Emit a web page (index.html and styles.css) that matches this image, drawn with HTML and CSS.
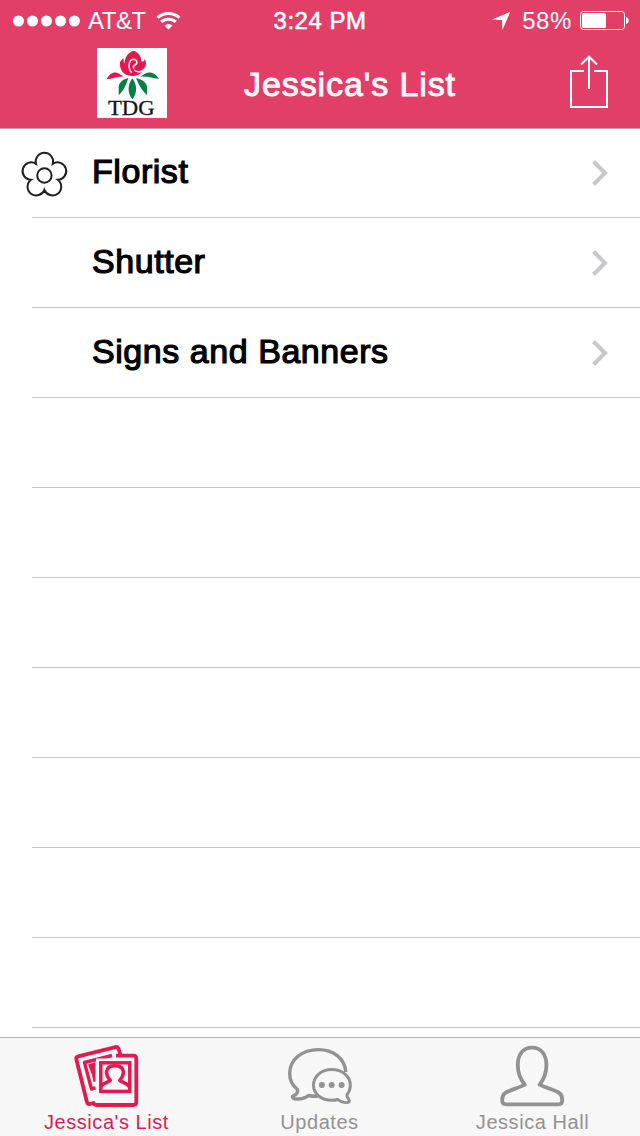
FILE: index.html
```html
<!DOCTYPE html>
<html>
<head>
<meta charset="UTF-8">
<meta name="viewport" content="width=device-width, initial-scale=1">
<title>Jessica's List</title>
<link rel="stylesheet" href="styles.css">
</head>
<body>

<header class="header">
  <div class="status">
    <div class="status-left">
      <svg class="signal" width="68" height="12" viewBox="0 0 68 12" fill="#fff">
        <circle cx="6.5" cy="6" r="5.5"/>
        <circle cx="20.5" cy="6" r="5.5"/>
        <circle cx="34.5" cy="6" r="5.5"/>
        <circle cx="48.5" cy="6" r="5.5"/>
        <circle cx="62.4" cy="6" r="5.5"/>
      </svg>
      <span class="carrier">AT&amp;T</span>
      <svg class="wifi" width="26" height="20" viewBox="0 0 26 20" fill="none" stroke="#fff" stroke-width="3">
        <path d="M1.5 6.7 A16.5 16.5 0 0 1 23.5 6.7"/>
        <path d="M5.2 10.9 A11 11 0 0 1 19.8 10.9"/>
        <path d="M8.5 14.5 A6 6 0 0 1 16.5 14.5 L12.5 18.5 Z" fill="#fff" stroke="none"/>
      </svg>
    </div>
    <div class="status-time">3:24 PM</div>
    <div class="status-right">
      <svg class="location" width="19" height="19" viewBox="0 0 19 19" fill="#fff">
        <path d="M18.3 0.8 L10.4 19 L10 9 L0 8.5 Z"/>
      </svg>
      <span class="percent">58%</span>
      <svg class="battery" width="49" height="19" viewBox="0 0 49 19">
        <rect x=".5" y=".5" width="44" height="18" rx="3" fill="none" stroke="#fff"/>
        <rect x="2" y="2" width="24" height="15" rx="1.5" fill="#fff"/>
        <path d="M46 6 C49.6 6.6 49.6 12.4 46 13 Z" fill="#fff"/>
      </svg>
    </div>
  </div>

  <div class="nav">
    <svg class="logo" width="70" height="70" viewBox="0 0 210 210">
      <rect width="210" height="210" fill="#fff"/>
      <path fill="#e2184e" d="M92 82 C74 77 67 58 69 43 C71 37 76 34 81 31 C79 38 80 43 83 46 C83 29 92 13 110 8 C125 14 134 25 132 39 C138 43 143 39 143 32 C152 49 144 64 130 68 C122 70 115 69 110 64 C112 72 122 76 135 73 C124 84 107 87 92 82 Z"/>
      <path fill="none" stroke="#fff" stroke-width="4.5" d="M104 74 C92 62 94 35 109 34 C121 34 123 47 114 51 C109 53 108 58 111 62"/>
      <path fill="#e2184e" d="M29 94 C36 78 48 71 59 74 C68 77 75 82 82 86 C63 84 48 93 29 94 Z"/>
      <path fill="#078048" d="M129 86 C141 78 151 71 164 74 C175 77 181 85 186 92 C166 91 153 84 129 86 Z"/>
      <path fill="#078048" d="M94 90 C79 93 66 103 65 117 V141 C77 132 88 111 94 90 Z"/>
      <path fill="#078048" d="M117 90 C132 93 149 103 150 117 V141 C138 132 125 111 117 90 Z"/>
      <path fill="#078048" d="M106 91 C91 111 91 136 106 154 C121 136 121 111 106 91 Z"/>
      <text x="33" y="201" textLength="140" lengthAdjust="spacingAndGlyphs" class="logo-text">TDG</text>
    </svg>
    <h1 class="title">Jessica's List</h1>
    <svg class="share" width="40" height="54" viewBox="0 0 40 54" fill="none" stroke="#fff" stroke-width="2">
      <path d="M15 16 H2 V52 H38 V16 H25"/>
      <path d="M20 2 V34 M12 9.5 L20 1.7 L28 9.5"/>
    </svg>
  </div>
</header>

<ul class="list">
  <li class="row">
    <span class="row-icon">
      <svg width="48" height="48" viewBox="0 0 48 48" fill="none" stroke="#231f20" stroke-width="2">
        <path d="M16 14.8 A8.7 8.7 0 1 1 32.8 14.8 A8.7 8.7 0 1 1 37.8 30.8 A8.7 8.7 0 1 1 24.4 40.8 A8.7 8.7 0 1 1 11 30.8 A8.7 8.7 0 1 1 16 14.8 Z"/>
        <circle cx="24.4" cy="26.5" r="7.2"/>
      </svg>
    </span>
    <span class="row-label">Florist</span>
    <svg class="chevron" width="18" height="28" viewBox="0 0 18 28"><path d="M2.5 2.5 L14 14 L2.5 25.5"/></svg>
  </li>
  <li class="row">
    <span class="row-icon"></span>
    <span class="row-label">Shutter</span>
    <svg class="chevron" width="18" height="28" viewBox="0 0 18 28"><path d="M2.5 2.5 L14 14 L2.5 25.5"/></svg>
  </li>
  <li class="row">
    <span class="row-icon"></span>
    <span class="row-label">Signs and Banners</span>
    <svg class="chevron" width="18" height="28" viewBox="0 0 18 28"><path d="M2.5 2.5 L14 14 L2.5 25.5"/></svg>
  </li>
  <li class="row"></li>
  <li class="row"></li>
  <li class="row"></li>
  <li class="row"></li>
  <li class="row"></li>
  <li class="row"></li>
  <li class="row"></li>
</ul>

<nav class="tabs">
  <a class="tab active">
    <svg width="65" height="64" viewBox="0 0 65 64" fill="none" stroke="currentColor" stroke-width="3.8" stroke-linejoin="round">
      <!-- back photo -->
      <path d="M46.5 11 L44.5 4.500 Q43.7 2.6 41.5 3.1 L4.2 12.4 Q1.8 13.2 2.4 15.5 L12.8 57.5 Q13.5 60.500 16 60 L21 58.500"/>
      <path d="M38 11.500 L10.500 18.500 L17.500 45 L21.500 43.800" stroke-width="3.4"/>
      <path d="M14 20.500 L21.500 18 V37.500 L19.500 38 L18 31 Z" fill="currentColor" stroke="none"/>
      <!-- front photo -->
      <path d="M22 14.5 H61 V60 H22 Z" fill="#f7f7f7" stroke="none"/>
      <path d="M42 11.700 H59.500 Q62.300 11.700 62.300 14.500 V58 Q62.300 61 59.500 61 H23 Q20 61 19.500 59"/>
      <rect x="26.800" y="18.800" width="29" height="28.600" stroke-width="3.500" stroke-linejoin="miter"/>
      <path d="M27 43 C28 39.500 32 39 36.300 36.500 Q32.500 32 32.500 28 Q33 21.700 41 21.700 Q49 21.700 49.500 28 Q49.500 32 45.700 36.500 C50 39 54 39.500 55 43" stroke-width="3.500"/>
    </svg>
    <span>Jessica's List</span>
  </a>
  <a class="tab">
    <svg width="65" height="64" viewBox="0 0 65 64" fill="none" stroke="currentColor" stroke-width="3.4" stroke-linejoin="round">
      <path d="M58.700 28 C58 14 46 5.600 31.500 5.600 C15 5.600 2.700 15.500 2.700 29.500 C2.700 37 6 42 10.500 45.500 C11.500 49 9 50.500 5.500 52.500 C5 56.500 17 55.500 21.500 51.500 C24.500 52 27 52.700 31 52"/>
      <path d="M44.800 25.500 C34.300 25.500 26.500 32.500 26.500 41 C26.500 50 34.300 56.300 44.800 56.300 C47.500 56.300 49 56 51 55.500 C54 58.500 61 59.500 62.300 57.600 C63 55.500 59.500 54 60 50.500 C62.200 48 63.300 45 63.300 41 C63.300 32.500 55.300 25.500 44.800 25.500 Z" stroke-width="3" fill="#f7f7f7"/>
      <g fill="currentColor" stroke="none">
        <circle cx="34.900" cy="41" r="3"/>
        <circle cx="44.700" cy="41" r="3"/>
        <circle cx="54.600" cy="41" r="3"/>
      </g>
    </svg>
    <span>Updates</span>
  </a>
  <a class="tab">
    <svg width="65" height="64" viewBox="0 0 65 64" fill="none" stroke="currentColor" stroke-width="3.8" stroke-linejoin="round">
      <path d="M32 3.700 C22.500 3.700 17.800 11 17.800 21 C17.800 28 20.500 35.500 24.800 40.700 C19 44 9 46 4.500 49.500 C2.200 51.500 2.200 54 2.200 56.500 Q2.200 60.300 6 60.300 H58.500 Q62.200 60.300 62.200 56.500 C62.200 54 62.200 51.500 60 49.500 C55.500 46 45.500 44 39.600 40.700 C43.700 35.500 46.400 28 46.400 21 C46.400 11 41.500 3.700 32 3.700 Z"/>
    </svg>
    <span>Jessica Hall</span>
  </a>
</nav>

</body>
</html>
```

FILE: styles.css
```css
* {
  box-sizing: border-box;
}

body {
  margin: 0;
  width: 640px;
  height: 1136px;
  display: flex;
  flex-direction: column;
  overflow: hidden;
  background: #fff;
  color: #000;
  font-family: "Liberation Sans", Arial, sans-serif;
}

svg {
  display: block;
  flex: none;
  overflow: visible;
}

.header {
  flex: none;
  height: 129px;
  background: #e13e68;
  border-bottom: 1px solid #b8a3a6;
  color: #fff;
}

.status {
  height: 40px;
  display: grid;
  grid-template-columns: 1fr 100px 1fr;
  align-items: center;
  font-size: 24px;
  line-height: 40px;
}

.status span,
.status-time {
  padding-top: 1px;
}

.status-left {
  display: flex;
  align-items: center;
  padding-left: 12px;
}

.carrier {
  width: 68px;
  padding-left: 8px;
  letter-spacing: -0.5px;
}

.wifi {
  margin-left: 8px;
}

.status-time {
  text-align: center;
  letter-spacing: 0.5px;
  white-space: nowrap;
  -webkit-text-stroke: 0.6px #fff;
}

.status-right {
  display: flex;
  align-items: center;
  justify-content: flex-end;
  padding-right: 11px;
}

.percent {
  margin: 0 8px 0 11px;
  letter-spacing: 0.6px;
}

.nav {
  height: 88px;
  display: flex;
  align-items: flex-start;
  padding: 8px 31px 0 97px;
}

.logo-text {
  font-family: "Liberation Serif", serif;
  font-size: 66px;
  fill: #151515;
  stroke: #151515;
  stroke-width: 1px;
}

.title {
  flex: 1;
  margin: 0;
  padding-right: 36px;
  font-size: 34px;
  font-weight: normal;
  line-height: 73px;
  letter-spacing: 0.9px;
  text-align: center;
  color: #faf5f6;
  -webkit-text-stroke: 1px #faf5f6;
}

.share {
  margin-top: 7px;
}

.list {
  flex: 1;
  margin: 0;
  padding: 0;
  list-style: none;
  overflow: hidden;
}

.row {
  height: 90px;
  margin-left: 32px;
  padding-right: 31px;
  display: flex;
  align-items: center;
  border-bottom: 1px solid #c8c7cc;
}

.row:first-child {
  height: 89px;
}

.row-icon {
  width: 60px;
}

/* icon hangs out to the left of the separator */
.row-icon svg {
  margin-left: -12px;
}

.row-label {
  flex: 1;
  padding-bottom: 3px;
  font-size: 34px;
  line-height: 40px;
  letter-spacing: 0.55px;
  -webkit-text-stroke: 1.2px #000;
}

.row:first-child .row-label {
  padding-bottom: 4px;
}

.chevron {
  fill: none;
  stroke: #c7c7cc;
  stroke-width: 4;
}

.tabs {
  flex: none;
  height: 99px;
  display: flex;
  background: #f7f7f7;
  border-top: 1px solid #b2b2b2;
}

.tab {
  width: 213px;
  display: flex;
  flex-direction: column;
  align-items: center;
  padding-top: 6px;
  color: #929292;
  font-size: 20px;
  line-height: 24px;
  letter-spacing: 0.55px;
}

.tab span {
  margin-top: 2px;
}

.active {
  color: #e01b52;
}
```
